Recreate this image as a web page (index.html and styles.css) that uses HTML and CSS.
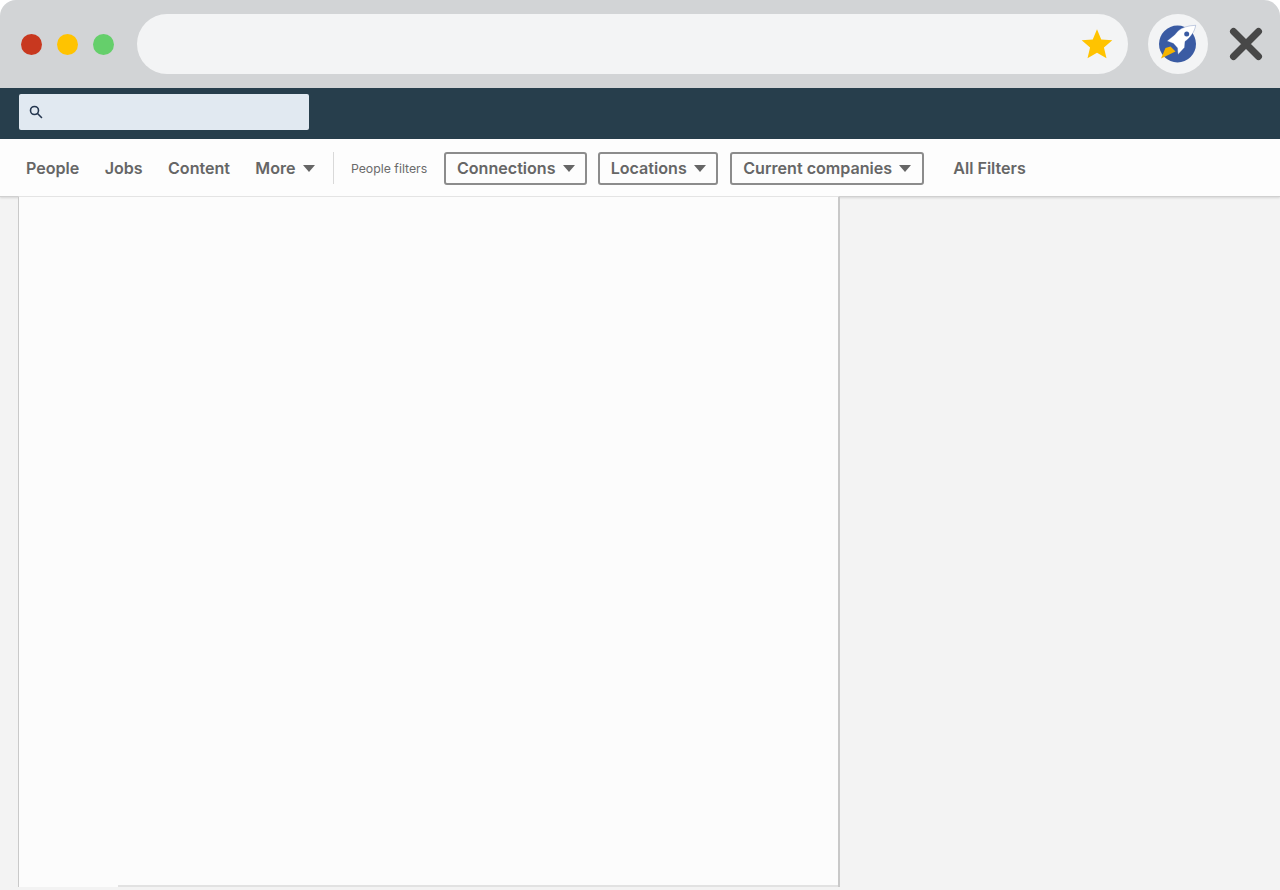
FILE: index.html
```html
<!DOCTYPE html>
<html lang="en">
<head>
    <meta charset="UTF-8">
    <meta name="viewport" content="width=device-width, initial-scale=1.0">
    <title>Search</title>
    <link rel="stylesheet" href="styles.css">
</head>
<body>

    <div class="browser-bar">
        <div class="dots">
            <span class="dot dot-red"></span>
            <span class="dot dot-yellow"></span>
            <span class="dot dot-green"></span>
        </div>
        <div class="address">
            <svg class="star" width="34" height="34" viewBox="0 0 24 24">
                <path fill="#ffc300" d="M12 1.600l3 7.200 7.800.6-5.900 5.100 1.800 7.600L12 18.100l-6.700 4 1.800-7.600-5.900-5.100 7.800-.6z"/>
            </svg>
        </div>
        <div class="ext-button">
            <svg width="40" height="40" viewBox="0 0 40 40">
                <circle cx="19.500" cy="20" r="18.500" fill="#3a5ba3"/>
                <path fill="#f5b400" d="M3 34.500L7.500 24l5-1.500 5 5z"/>
                <path fill="#fff" stroke="#3a5ba3" stroke-width=".3" d="M37.700 1.300C30 1.500 24 3.500 20 7l-3.500 4L9 17l6.500 2.500 4 4.500.5 6.500 6.500-7 .5-6C32.500 13.500 36.500 8 37.700 1.300z"/>
                <circle cx="28.700" cy="10" r="2.500" fill="#3a5ba3"/>
            </svg>
        </div>
        <svg class="close" width="34" height="34" viewBox="0 0 34 34">
            <path stroke="#484848" stroke-width="7" stroke-linecap="round" d="M4.500 4.500l25 25M29.500 4.500l-25 25"/>
        </svg>
    </div>

    <div class="top-nav">
        <div class="search-box">
            <svg width="14" height="14" viewBox="0 0 14 14" fill="none" stroke="#24364f" stroke-width="1.600">
                <circle cx="5.500" cy="5.500" r="4"/>
                <path stroke-linecap="round" d="M8.500 8.500l4 4"/>
            </svg>
        </div>
    </div>

    <div class="filter-bar">
        <a class="tab">People</a>
        <a class="tab">Jobs</a>
        <a class="tab">Content</a>
        <a class="tab">More <span class="caret"></span></a>
        <span class="divider"></span>
        <span class="filters-label">People filters</span>
        <button class="pill pill-connections">Connections <span class="caret"></span></button>
        <button class="pill pill-locations">Locations <span class="caret"></span></button>
        <button class="pill pill-companies">Current companies <span class="caret"></span></button>
        <a class="tab all-filters">All Filters</a>
    </div>

    <div class="content">
        <div class="results">
            <div class="results-edge"></div>
        </div>
    </div>

</body>
</html>
```

FILE: styles.css
```css
html, body {
    height: 100%;
}
body {
    margin: 0;
    background-color: #fff;
    font-family: Inter, "Noto Sans", Arial, sans-serif;
    display: flex;
    flex-direction: column;
    overflow: hidden;
}
.browser-bar {
    height: 88px;
    flex-shrink: 0;
    box-sizing: border-box;
    padding: 0 17px 0 21px;
    background-color: #d2d4d6;
    border-radius: 16px 16px 0 0;
    display: flex;
    align-items: center;
}
.dots {
    display: flex;
    gap: 15px;
    margin-right: 23px;
}
.dot {
    width: 21px;
    height: 21px;
    border-radius: 50%;
}
.dot-red {
    background-color: #c8381f;
}
.dot-yellow {
    background-color: #ffc300;
}
.dot-green {
    background-color: #65cf6b;
}
.address {
    width: 991px;
    height: 60px;
    border-radius: 30px;
    background-color: #f3f4f5;
    display: flex;
    align-items: center;
    justify-content: flex-end;
    padding-right: 14px;
    box-sizing: border-box;
}
.ext-button {
    width: 60px;
    height: 60px;
    margin-left: 20px;
    border-radius: 50%;
    background-color: #f3f4f5;
    display: flex;
    align-items: center;
    justify-content: center;
}
.close {
    margin-left: 21px;
}
.top-nav {
    height: 51px;
    flex-shrink: 0;
    box-sizing: border-box;
    padding: 6px 0 0 19px;
    background-color: #273e4c;
}
.search-box {
    width: 290px;
    height: 36px;
    box-sizing: border-box;
    padding-left: 10px;
    border-radius: 2px;
    background-color: #e1e9f1;
    display: flex;
    align-items: center;
}
.filter-bar {
    height: 58px;
    flex-shrink: 0;
    box-sizing: border-box;
    padding-left: 26px;
    background-color: #fdfdfd;
    border-bottom: 1px solid #d0d0d0;
    box-shadow: 0 1px 2px rgba(0, 0, 0, 0.12);
    display: flex;
    align-items: center;
    position: relative;
}
.tab {
    font-size: 16.100px;
    font-weight: 600;
    color: #666;
    margin-right: 25.300px;
    white-space: nowrap;
}
.caret {
    display: inline-block;
    width: 0;
    height: 0;
    margin-left: 3px;
    vertical-align: 2px;
    border-left: 6.500px solid transparent;
    border-right: 6.500px solid transparent;
    border-top: 7px solid #666;
}
.divider {
    width: 1px;
    height: 32px;
    margin: 0 17px 0 -7px;
    background-color: #d9d9d9;
}
.filters-label {
    font-size: 12.300px;
    color: #6b6b6b;
    margin: 2px 17px 0 0;
    white-space: nowrap;
}
.pill {
    height: 33px;
    box-sizing: border-box;
    padding: 0 0 2px;
    margin: 2px 12px 0 0;
    border: 2px solid #8c8c8c;
    border-radius: 3px;
    background-color: #fdfdfd;
    font-family: inherit;
    font-size: 16.100px;
    font-weight: 600;
    color: #666;
    white-space: nowrap;
}
.pill-connections {
    width: 143px;
    margin-right: 11px;
}
.pill-locations {
    width: 120px;
}
.pill-companies {
    width: 194px;
    margin-right: 29px;
}
.all-filters {
    margin-right: 0;
}
.content {
    flex: 1;
    background-color: #f3f3f3;
    padding: 0 0 3px 18px;
    display: flex;
}
.results {
    width: 822px;
    margin-top: -1px;
    box-sizing: border-box;
    background-color: #fcfcfc;
    border-top: 1px solid #e4e4e4;
    border-left: 1px solid #c9c9c9;
    border-right: 2px solid #c9c9c9;
    position: relative;
    display: flex;
    flex-direction: column;
    justify-content: flex-end;
}
.results-edge {
    height: 2px;
    margin-left: 99px;
    background-color: #e2e2e2;
}
```
